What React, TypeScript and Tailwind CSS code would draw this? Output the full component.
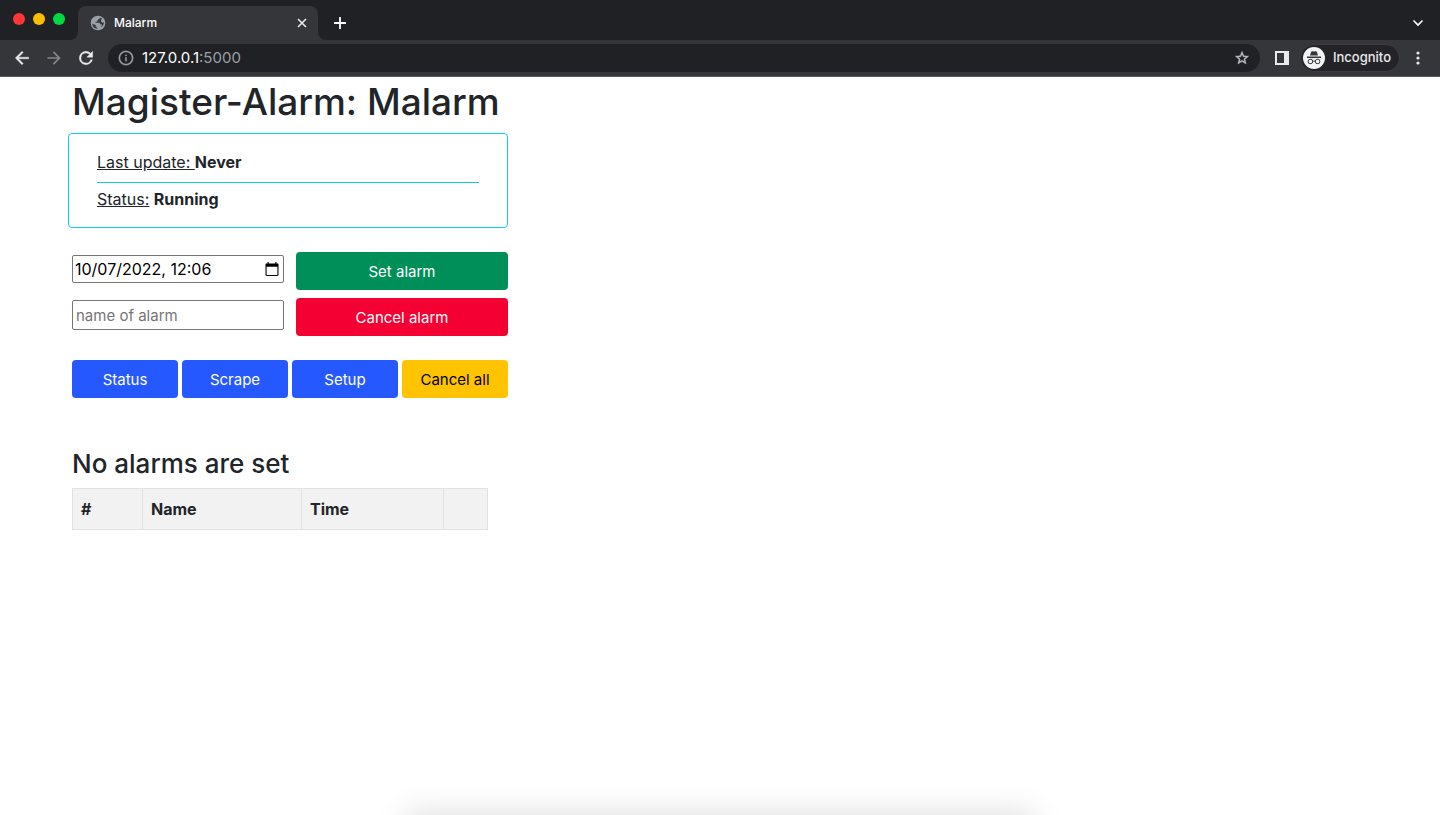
import React from "react";

const icon = "fill-current shrink-0";

function Globe() {
  return (
    <svg viewBox="0 0 24 24" className="size-4 shrink-0" aria-hidden="true">
      <circle cx="12" cy="12" r="11" fill="#9aa0a6" />
      <path
        fill="#35363a"
        d="M14.500 3.600c.5 1.600-.2 2.700-1.800 3-1.500.2-1.700.7-1.500 2 .1 1.100-.7 1.600-2 1.700-1 .1-1.100.8-.5 1.400h4.200c1.500 0 2.400.9 2.500 2.300h1.300c1 0 1.300.7 1 1.700l-1.500 2.700a8.800 8.800 0 0 0 4.700-7.500c-1.600 1-3.300.6-4.100-1-.9-1.700-.2-3.400 1.600-4.200a8.800 8.800 0 0 0-3.900-2.100ZM3.400 12.600a8.800 8.800 0 0 0 7.400 8.200v-2c-1.600-.2-2.300-1-2.300-2.500 0-1.200-.6-1.700-1.800-1.900-1.500-.3-2.500-.8-3.300-1.800Z"
      />
    </svg>
  );
}

function Browser() {
  return (
    <header className="border-b border-[#5b5b5f] bg-[#202124] text-[#e8eaed]">
      <div className="flex h-10 items-end pr-4">
        <div className="flex gap-2 self-center pb-0.5 pl-[13px] pr-[13px]">
          <span className="size-3 rounded-full bg-[#ff3637]" />
          <span className="size-3 rounded-full bg-[#ffbd00]" />
          <span className="size-3 rounded-full bg-[#00d944]" />
        </div>
        <svg viewBox="0 0 8 8" className="-ml-2 size-2 fill-[#35363a]" aria-hidden="true">
          <path d="M8 0v8H0a8 8 0 0 0 8-8Z" />
        </svg>
        <div className="flex h-[34px] w-60 items-center rounded-t-lg bg-[#35363a] pl-3 pr-2.5">
          <Globe />
          <span className="ml-2 flex-1 text-xs font-medium text-white">Malarm</span>
          <button type="button" aria-label="Close tab">
            <svg viewBox="0 0 12 12" className="size-3 fill-none stroke-current" strokeWidth="1.6">
              <path d="m2 2 8 8m0-8-8 8" />
            </svg>
          </button>
        </div>
        <svg viewBox="0 0 8 8" className="size-2 fill-[#35363a]" aria-hidden="true">
          <path d="M0 0v8h8a8 8 0 0 1-8-8Z" />
        </svg>
        <button type="button" aria-label="New tab" className="mb-[11px] ml-2">
          <svg viewBox="0 0 12 12" className="size-3 fill-none stroke-white" strokeWidth="1.8">
            <path d="M6 0v12M0 6h12" />
          </svg>
        </button>
        <button type="button" aria-label="Search tabs" className="mb-[11px] ml-auto">
          <svg viewBox="0 0 12 12" className="size-3 fill-none stroke-white" strokeWidth="1.7">
            <path d="m1.500 3.500 4.500 4.500 4.500-4.500" />
          </svg>
        </button>
      </div>
      <div className="flex h-9 items-center bg-[#35363a] pl-3 pr-3.5">
        <button type="button" aria-label="Back">
          <svg viewBox="0 0 24 24" className={`${icon} size-5`}>
            <path d="M20 11H7.830l5.590-5.590L12 4l-8 8 8 8 1.410-1.410L7.830 13H20v-2z" stroke="currentColor" strokeWidth=".5" />
          </svg>
        </button>
        <button type="button" aria-label="Forward" className="ml-3 text-[#85868a]">
          <svg viewBox="0 0 24 24" className={`${icon} size-5`}>
            <path d="m12 4-1.410 1.410L16.170 11H4v2h12.170l-5.580 5.590L12 20l8-8z" />
          </svg>
        </button>
        <button type="button" aria-label="Reload" className="ml-3">
          <svg viewBox="0 0 24 24" className={`${icon} size-5`}>
            <path d="M17.650 6.350A7.958 7.958 0 0 0 12 4a8 8 0 1 0 7.730 10h-2.080A6 6 0 1 1 12 6c1.660 0 3.140.69 4.220 1.780L13 11h7V4l-2.350 2.350z" stroke="currentColor" strokeWidth=".5" />
          </svg>
        </button>
        <div className="ml-3 flex h-7 flex-1 items-center rounded-full bg-[#202124] pl-2.5 pr-2.5">
          <svg viewBox="0 0 24 24" className={`${icon} size-4 text-[#9aa0a6]`} aria-hidden="true">
            <path d="M11 7h2v2h-2zm0 4h2v6h-2zm1-10a11 11 0 1 0 0 22 11 11 0 0 0 0-22zm0 20a9 9 0 1 1 0-18 9 9 0 0 1 0 18z" stroke="currentColor" strokeWidth=".4" />
          </svg>
          <span className="ml-2 flex-1 text-[15px] text-[#9aa0a6]">
            <span className="text-white">127.0.0.1</span>:5000
          </span>
          <button type="button" aria-label="Bookmark this page" className="text-[#bdc1c6]">
            <svg viewBox="0 0 24 24" className={`${icon} size-4`}>
              <path d="m22 9.240-7.190-.62L12 2 9.190 8.630 2 9.240l5.460 4.730L5.820 21 12 17.270 18.180 21l-1.630-7.030L22 9.240zM12 15.400l-3.760 2.270 1-4.280-3.320-2.880 4.380-.38L12 6.100l1.710 4.040 4.380.38-3.320 2.880 1 4.280L12 15.400z" stroke="currentColor" strokeWidth=".6" />
            </svg>
          </button>
        </div>
        <button type="button" aria-label="Side panel" className="ml-[15px]">
          <svg viewBox="0 0 14 14" className={`${icon} size-3.5`}>
            <path fillRule="evenodd" d="M0 0h14v14H0zM2 2v10h7V2z" />
          </svg>
        </button>
        <button type="button" className="ml-[11px] flex h-7 items-center rounded-full border border-[#3f3b40] bg-[#242428] pl-0.5 pr-2 text-[13px] font-medium">
          <svg viewBox="0 0 22 22" className="mr-2 size-[22px]" aria-hidden="true">
            <circle cx="11" cy="11" r="11" fill="#f1f3f4" />
            <path d="M7 8.500 8.200 4.800c.2-.6.7-.8 1.300-.6l1.500.4 1.500-.4c.6-.2 1.100 0 1.300.6L15 8.500ZM4 9.600h14v1.300H4z" fill="#35363a" />
            <path d="M9.600 14.500c.9-.6 1.900-.6 2.800 0" fill="none" stroke="#35363a" />
            <rect x="5.200" y="12.400" width="4.400" height="4.200" rx="1.700" fill="none" stroke="#35363a" />
            <rect x="12.400" y="12.400" width="4.400" height="4.200" rx="1.700" fill="none" stroke="#35363a" />
          </svg>
          Incognito
        </button>
        <button type="button" aria-label="Menu" className="ml-2.5">
          <svg viewBox="0 0 16 16" className={`${icon} size-4`}>
            <circle cx="8" cy="3" r="1.600" />
            <circle cx="8" cy="8" r="1.600" />
            <circle cx="8" cy="13" r="1.600" />
          </svg>
        </button>
      </div>
    </header>
  );
}

const btn = "h-[38px] rounded pt-0.5 text-[15px]";
const cell = "border border-[#dee2e6] p-2 text-left font-bold";

export default function App() {
  return (
    <div className="flex min-h-screen flex-col overflow-hidden bg-white font-['Inter',sans-serif] text-[#212529]">
      <Browser />
      <main className="ml-[68px] w-full max-w-[440px] flex-1">
        <h1 className="mb-1.5 whitespace-nowrap pl-1 text-[37px] font-medium leading-[50px]">Magister-Alarm: Malarm</h1>
        <section className="rounded border border-[#0dcaf0] px-7 py-4">
          <p>
            <u>Last update: </u>
            <b>Never</b>
          </p>
          <hr className="mb-1 mt-2 border-[#0dcaf0]" />
          <p>
            <u>Status:</u> <b>Running</b>
          </p>
        </section>
        <form className="mt-6 pl-1" onSubmit={(e) => e.preventDefault()}>
          <div className="grid grid-cols-2 items-center gap-x-3 gap-y-2">
            <div className="mb-1 flex h-7 items-center rounded-xs border border-[#767676] pl-0.5 pr-1 text-black">
              <input aria-label="Alarm time" defaultValue="10/07/2022, 12:06" className="w-full min-w-0 flex-1 outline-none" />
              <button type="button" aria-label="Show date picker">
                <svg viewBox="0 0 14 15" className="h-[15px] w-3.5 fill-black">
                  <path fillRule="evenodd" d="M2.500.3h1.300v1.200h6.400V.3h1.300v1.200h.8c.8 0 1.200.5 1.200 1.200v10.100c0 .7-.5 1.200-1.200 1.200H1.700c-.7 0-1.200-.5-1.200-1.200V2.700c0-.7.5-1.200 1.200-1.200h.8ZM1.600 4.700v8.200h10.800V4.700Z" />
                </svg>
              </button>
            </div>
            <button type="submit" className={`${btn} bg-[#008f58] text-white`}>Set alarm</button>
            <input
              aria-label="Name of alarm"
              placeholder="name of alarm"
              className="mb-1 h-[30px] w-full min-w-0 rounded-xs border border-[#767676] px-[3px] text-[15px] placeholder:text-[#757575]"
            />
            <button type="button" className={`${btn} bg-[#f40032] text-white`}>Cancel alarm</button>
          </div>
          <div className="mt-6 grid grid-cols-4 gap-1">
            <button type="button" className={`${btn} bg-[#2559ff] text-white`}>Status</button>
            <button type="button" className={`${btn} bg-[#2559ff] text-white`}>Scrape</button>
            <button type="button" className={`${btn} bg-[#2559ff] text-white`}>Setup</button>
            <button type="button" className={`${btn} bg-[#ffc300] text-black`}>Cancel all</button>
          </div>
        </form>
        <h2 className="mb-1.5 mt-12 pl-1 text-[26px] font-medium leading-9">No alarms are set</h2>
        <table className="ml-1 w-[416px] table-fixed border-collapse bg-[#f2f2f2]">
          <thead>
            <tr>
              <th scope="col" className={`${cell} w-[70px]`}>#</th>
              <th scope="col" className={`${cell} w-[159px]`}>Name</th>
              <th scope="col" className={`${cell} w-[142px]`}>Time</th>
              <th scope="col" aria-label="Actions" className={cell} />
            </tr>
          </thead>
        </table>
      </main>
      <div className="mx-auto h-0 w-[600px] shadow-[0_12px_32px_14px_rgba(0,0,0,0.14)]" />
    </div>
  );
}
